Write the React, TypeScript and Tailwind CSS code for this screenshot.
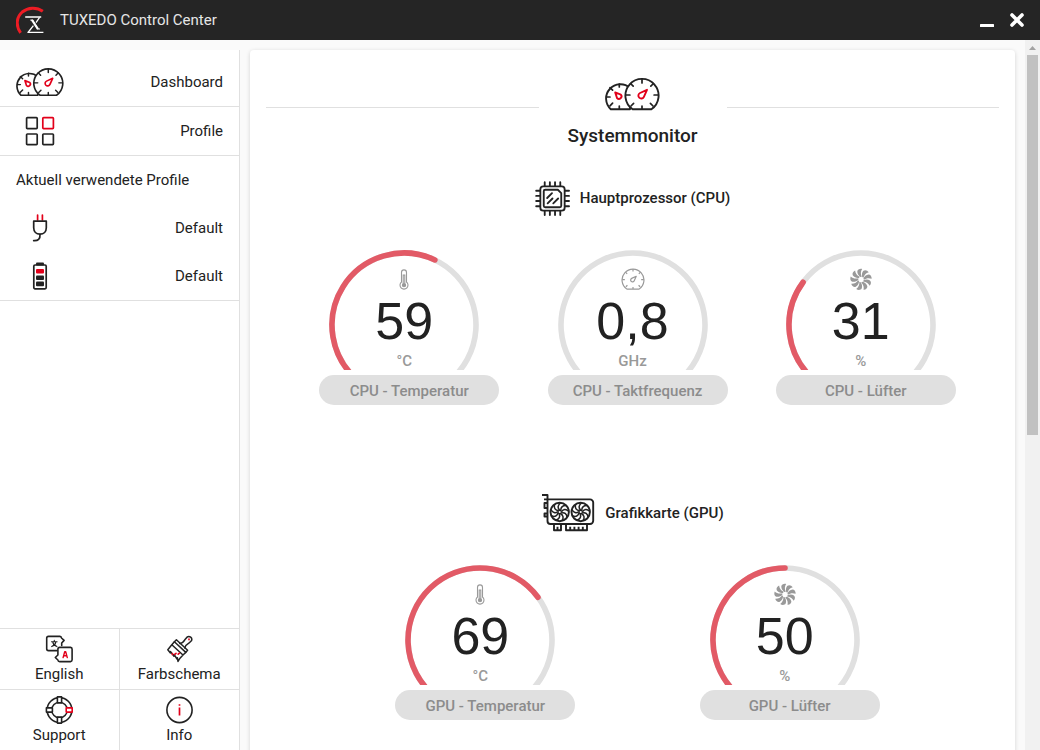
import type { ReactNode } from "react";

const RED = "#e2001a";
const INK = "#222";

function Needle({ small = false }: { small?: boolean }) {
  return small ? (
    <path d="M10.2 15.4 L15.8 17.6 A2.5 2.5 0 1 1 12 21 Z" />
  ) : (
    <path d="M42 12.8 L38.9 19.8 A2.9 2.9 0 1 1 35 16 Z" />
  );
}

function DialsIcon({ className }: { className: string }) {
  return (
    <svg className={className} viewBox="0 0 55 34" fill="none" stroke={INK} strokeWidth="1.9" strokeLinecap="round" strokeLinejoin="round" aria-hidden="true">
      <path d="M5.8 32.2 A13 13 0 1 1 25 11 L25 32.2 Z" />
      <path d="M14.3 7 v3 M1.5 20 h3.5 M14.3 32 v-3 M5 10.6 l2.6 2.6 M5 28.8 l2.6 -2.6" strokeWidth="1.7" />
      <path d="M27.6 32.2 A16.6 16.6 0 1 1 46.4 32.2 Z" fill="#fff" />
      <path d="M37 2 v4 M20.9 18 h4 M49.1 18 h4 M37 32 v-3 M25.5 6.5 l2.7 2.7 M48.5 6.5 l-2.7 2.7 M26 29 l2.6 -2.6 M48 29 l-2.6 -2.6" strokeWidth="1.7" />
      <g stroke={RED} strokeWidth="1.9">
        <Needle small />
        <Needle />
      </g>
    </svg>
  );
}

function SpeedIcon() {
  return (
    <svg className="h-6 w-6" viewBox="18.5 -1.5 37 37" fill="none" stroke="#999" strokeWidth="1.8" strokeLinejoin="round" aria-hidden="true">
      <path d="M27.6 32.6 A16.9 16.9 0 1 1 46.4 32.6 Z" />
      <path d="M37 1.5 v4 M20.4 18 h4 M49.6 18 h4 M37 32.4 v-3 M25.5 6.5 l2.5 2.5 M48.5 6.5 l-2.5 2.5 M26 29 l2.4 -2.4 M48 29 l-2.4 -2.4" />
      <Needle />
    </svg>
  );
}

function ThermometerIcon() {
  return (
    <svg className="h-6 w-6" viewBox="0 0 24 24" fill="none" stroke="#999" strokeWidth="1.1" aria-hidden="true">
      <path d="M9.5 15 V5.4 a2.5 2.5 0 0 1 5 0 V15 a4 4 0 1 1 -5 0 Z" />
      <path d="M11.2 16.6 V8 h1.6 V16.6" />
      <circle cx="12" cy="18.2" r="1.6" fill="#999" />
    </svg>
  );
}

const BLADE_ANGLES = [0, 40, 80, 120, 160, 200, 240, 280, 320];

function FanIcon() {
  return (
    <svg className="h-6 w-6" viewBox="-12 -12.5 24 24" fill="#999" aria-hidden="true">
      {BLADE_ANGLES.map((a) => (
        <path key={a} transform={`rotate(${a})`} d="M0.8 -2.8 C-0.6 -5.6 -0.4 -8.2 1.2 -10.6 C-1 -11.2 -3.4 -10.2 -3.7 -8.2 C-3.8 -6 -2.5 -3.8 -0.6 -2.6 Z" />
      ))}
    </svg>
  );
}

function CpuIcon() {
  return (
    <svg className="h-[35px] w-[35px]" viewBox="0 0 36 36" fill="none" stroke={INK} strokeWidth="1.9" strokeLinecap="round" strokeLinejoin="round" aria-hidden="true">
      <rect x="5.5" y="5.5" width="25" height="25" rx="3" />
      <path d="M10.5 9 H23.5 L27 12.5 V25.5 A1.5 1.5 0 0 1 25.5 27 H10.5 A1.5 1.5 0 0 1 9 25.5 V10.5 A1.5 1.5 0 0 1 10.5 9 Z" />
      <path d="M10 1.2v4M15.3 1.2v4M20.6 1.2v4M26 1.2v4M10 31v4M15.3 31v4M20.6 31v4M26 31v4M1.2 10h4M1.2 15.3h4M1.2 20.6h4M1.2 26h4M31 10h4M31 15.3h4M31 20.6h4M31 26h4" />
      <path d="M12.5 17.5 L17.5 12.5 M13 23 L18 18 M18.8 23 L23.8 18" />
    </svg>
  );
}

function GpuFan({ x }: { x: number }) {
  return (
    <g transform={`translate(${x} 19)`}>
      <circle r="9.2" />
      <circle r="1.7" strokeWidth="1.2" />
      {BLADE_ANGLES.map((a) => (
        <path key={a} transform={`rotate(${a})`} d="M0 -1.9 C-2.4 -4 -2 -6.8 0.8 -9" strokeWidth="1.5" />
      ))}
    </g>
  );
}

function GpuIcon() {
  return (
    <svg className="h-10 w-[54px]" viewBox="-0.5 0 54 40" fill="none" stroke={INK} strokeWidth="1.9" strokeLinejoin="round" aria-hidden="true">
      <path d="M0.5 2 H6 V28 A3 3 0 0 0 9 31 H48.5 A3.2 3.2 0 0 0 51.7 27.8 V9.6 A3.2 3.2 0 0 0 48.5 6.4 H2.5" />
      <path d="M6 10 H3 V15 H6 M6 20.5 H3 V23.5 H6" />
      <path d="M12.5 31 V37.2 H19.5 V31 M16 33.8 V37 M24.5 31 V37.2 H45.5 V31 M28.7 33.8 V37 M32.9 33.8 V37 M37.1 33.8 V37 M41.3 33.8 V37" />
      <GpuFan x={18.2} />
      <GpuFan x={39.2} />
    </svg>
  );
}

function ProfileIcon() {
  return (
    <svg className="h-[30px] w-[30px]" viewBox="0 0 30 30" fill="none" stroke={INK} strokeWidth="1.7" aria-hidden="true">
      <rect x="1.6" y="1.6" width="10.6" height="11" rx="0.8" />
      <rect x="17.8" y="1.6" width="10.6" height="11" rx="0.8" stroke={RED} />
      <rect x="1.6" y="18" width="10.6" height="10.6" rx="0.8" />
      <rect x="17.8" y="18" width="10.6" height="10.6" rx="0.8" />
    </svg>
  );
}

function PlugIcon() {
  return (
    <svg className="h-7 w-4" viewBox="0 0 16 28" fill="none" stroke={INK} strokeWidth="1.7" strokeLinecap="round" strokeLinejoin="round" aria-hidden="true">
      <path d="M5.6 1 V6 M10.4 1 V6" stroke={RED} />
      <path d="M1.7 7.2 H14.3 V13.8 C14.3 17.5 11.8 20.2 8 20.2 C4.2 20.2 1.7 17.5 1.7 13.8 Z" />
      <path d="M8 20.5 C8.4 24.8 6 27 1.7 26.6" />
    </svg>
  );
}

function BatteryIcon() {
  return (
    <svg className="h-7 w-4" viewBox="0 0 16 28" fill={INK} aria-hidden="true">
      <rect x="4" y="0.5" width="8" height="3" rx="1" />
      <rect x="1.8" y="3" width="12.4" height="23.8" rx="1.2" fill="none" stroke={INK} strokeWidth="1.7" />
      <rect x="4" y="7" width="8" height="4.6" rx="1" fill={RED} />
      <rect x="4" y="13.4" width="8" height="4.6" rx="1" />
      <rect x="4" y="19.6" width="8" height="4.6" rx="1" />
    </svg>
  );
}

function LanguageIcon() {
  return (
    <svg className="h-7 w-7" viewBox="-0.5 0 28 28" fill="none" stroke={INK} strokeWidth="1.6" strokeLinejoin="round" strokeLinecap="round" aria-hidden="true">
      <path d="M11.5 15.6 H3 A1.8 1.8 0 0 1 1.2 13.8 V3.2 A1.8 1.8 0 0 1 3 1.4 H14.4 A1.8 1.8 0 0 1 16 3 L18.6 5.4 L16.2 8 V10.5" />
      <path d="M14.2 12.4 H25 A1.8 1.8 0 0 1 26.6 14.2 V24.8 A1.8 1.8 0 0 1 25 26.6 H14.2 A1.8 1.8 0 0 1 12.4 25 L9.8 22.5 L12.4 20 V14.2 A1.8 1.8 0 0 1 14.2 12.4 Z" />
      <path d="M6 6.8 H11.6 M8.8 5.4 V6.8 M10.4 6.8 C10 9 8.4 10.8 6.2 11.6 M7.2 6.8 C7.6 9 9.2 10.8 11.4 11.6" strokeWidth="1.1" />
      <path d="M17.6 22.6 L19.2 16.8 H20.2 L21.8 22.6 M18.2 20.8 H21.2" stroke={RED} strokeWidth="1.4" />
    </svg>
  );
}

function BrushIcon() {
  return (
    <svg className="h-7 w-7" viewBox="-1 0 28 28" fill="none" stroke={INK} strokeWidth="1.5" strokeLinejoin="round" strokeLinecap="round" aria-hidden="true">
      <path d="M13.8 8.4 C16.4 8 17.6 7 18.8 4.8 L21 2.2 A2.9 2.9 0 0 1 25.4 5.8 L22.8 8.2 C20.4 9.6 19.2 10.8 18.8 13" />
      <path d="M8.4 6.8 L10.4 4.8 L21.6 15.2 L19.8 17.4 Z" />
      <path d="M8.4 6.8 L5.8 9.8 L17 20 L19.8 17.4 M5.8 9.8 L1.8 14.8 L4.4 18 L4.6 16.6 L8 21.2 L8.2 19.6 L11 24 L11.4 22.8 L12 26.4 L14 23.2 L17 20" />
      <path d="M6.4 18.6 V19.4 M8.8 19.4 L10 18.4 M12.2 19.2 L13.4 18.2 M23 4.2 V4.6" stroke={RED} strokeWidth="1.7" />
    </svg>
  );
}

function SupportIcon() {
  return (
    <svg className="h-7 w-7" viewBox="-0.5 0 28 28" fill="none" stroke={INK} strokeWidth="1.6" strokeLinejoin="round" aria-hidden="true">
      <circle cx="14" cy="14" r="12.4" />
      <circle cx="14" cy="14" r="7.8" />
      <g fill="#fff">
        <rect x="11.9" y="0.9" width="4.2" height="6" />
        <rect x="11.9" y="21.1" width="4.2" height="6" />
        <rect x="0.9" y="11.9" width="6" height="4.2" />
        <rect x="20.7" y="11.9" width="6" height="4.2" stroke={RED} />
      </g>
    </svg>
  );
}

function InfoIcon() {
  return (
    <svg className="h-7 w-7" viewBox="-0.5 0 28 28" fill="none" stroke={INK} strokeWidth="1.6" aria-hidden="true">
      <circle cx="14" cy="14" r="12.6" />
      <path d="M14 11.4 V19.4 M14 8.2 V9.8" stroke={RED} strokeWidth="1.7" />
    </svg>
  );
}

function LogoIcon() {
  return (
    <svg className="h-7 w-7" viewBox="0 0 28 28" fill="none" aria-hidden="true">
      <path d="M4.6 26.8 C-0.4 20 0.2 11.4 6.2 6 C12 1.2 20.6 0.8 26.8 5.2" stroke="#ed1c24" strokeWidth="3" />
      <path d="M9.2 11 H25.2 M11.4 26.4 H27.4" stroke="#fff" strokeWidth="1.3" />
      <path d="M23.6 11.4 L20 16.6 M17.4 19.6 L12.4 26" stroke="#fff" strokeWidth="1.3" />
      <path d="M14.4 14.2 H16.6 L21.8 23 H24" stroke="#fff" strokeWidth="1.2" />
      <path d="M16 14 L22 23.2" stroke="#fff" strokeWidth="2.2" />
    </svg>
  );
}

type GaugeData = { value: number; text: string; unit: string; label: string; icon: ReactNode };

// The scale runs symmetrically around the top, 141 degrees to each side.
const SWEEP = 141;

function arcPoint(deg: number) {
  const rad = (deg * Math.PI) / 180;
  return `${75 + 72 * Math.sin(rad)} ${75 - 72 * Math.cos(rad)}`;
}

function arc(from: number, to: number) {
  return `M${arcPoint(from)} A72 72 0 ${to - from > 180 ? 1 : 0} 1 ${arcPoint(to)}`;
}

function Gauge({ value, text, unit, label, icon }: GaugeData) {
  const end = -SWEEP + (value / 100) * SWEEP * 2;
  return (
    <div className="flex w-[180px] flex-col gap-[5px]">
      <div className="mx-auto grid h-[120px] w-[150px] overflow-hidden">
        <svg className="col-start-1 row-start-1 h-[150px] w-[150px]" viewBox="0 0 150 150" fill="none" strokeWidth="5.6" strokeLinecap="round" aria-hidden="true">
          <path d={arc(-SWEEP, SWEEP)} stroke="#e0e0e0" />
          {value > 0 && <path d={arc(-SWEEP, end)} stroke="#e25a66" />}
        </svg>
        <div className="col-start-1 row-start-1 flex flex-col items-center pt-[17px]">
          {icon}
          <span className="font-['Liberation_Sans',sans-serif] text-[52px] leading-[60px] text-[#222]">{text}</span>
          <span className="text-[15px] leading-5 font-medium text-[#999]">{unit}</span>
        </div>
      </div>
      <div className="ml-[5px] h-[30px] w-[180px] rounded-full bg-[#e0e0e0] text-center text-[15px] leading-8 font-medium text-[#8c8c8c]">
        {label}
      </div>
    </div>
  );
}

function GaugeSection({ title, icon, gauges }: { title: string; icon: ReactNode; gauges: GaugeData[] }) {
  return (
    <section className="pb-[84px]">
      <div className="flex h-12 items-center justify-center gap-[10px]">
        {icon}
        <h2 className="text-[15px] font-medium">{title}</h2>
      </div>
      <div className="mt-7 flex justify-evenly">
        {gauges.map((g) => (
          <Gauge key={g.label} {...g} />
        ))}
      </div>
    </section>
  );
}

const cpuGauges: GaugeData[] = [
  { value: 59, text: "59", unit: "°C", label: "CPU - Temperatur", icon: <ThermometerIcon /> },
  { value: 0, text: "0,8", unit: "GHz", label: "CPU - Taktfrequenz", icon: <SpeedIcon /> },
  { value: 31, text: "31", unit: "%", label: "CPU - Lüfter", icon: <FanIcon /> },
];

const gpuGauges: GaugeData[] = [
  { value: 69, text: "69", unit: "°C", label: "GPU - Temperatur", icon: <ThermometerIcon /> },
  { value: 50, text: "50", unit: "%", label: "GPU - Lüfter", icon: <FanIcon /> },
];

function NavRow({ icon, label, bordered = false }: { icon: ReactNode; label: string; bordered?: boolean }) {
  return (
    <a href="#" className={bordered ? "flex items-center justify-between border-b border-[#e0e0e0] px-4" : "flex items-center justify-between px-4"}>
      <span className="flex h-12 w-12 items-center justify-center">{icon}</span>
      {label}
    </a>
  );
}

function FooterButton({ icon, label, divided = false }: { icon: ReactNode; label: string; divided?: boolean }) {
  return (
    <button type="button" className={divided ? "flex h-[61px] flex-col items-center border-t border-r border-[#e0e0e0] pt-[6px]" : "flex h-[61px] flex-col items-center border-t border-[#e0e0e0] pt-[6px]"}>
      {icon}
      <span className="leading-[22px]">{label}</span>
    </button>
  );
}

export default function App() {
  return (
    <div className="flex h-screen flex-col overflow-hidden bg-[#fafafa] font-[Roboto,sans-serif] text-[15px] text-[#222]">
      <header className="flex h-10 shrink-0 items-center bg-[#252525] pr-2 pl-4 text-[#e6e6e6]">
        <LogoIcon />
        <h1 className="ml-4 flex-1">TUXEDO Control Center</h1>
        <button type="button" aria-label="Minimieren" className="flex h-10 w-[30px] items-center justify-center">
          <svg className="h-4 w-4" viewBox="0 0 16 16" aria-hidden="true">
            <rect x="1" y="12" width="14" height="3" rx="0.5" fill="#fff" />
          </svg>
        </button>
        <button type="button" aria-label="Schließen" className="flex h-10 w-[30px] items-center justify-center">
          <svg className="h-4 w-4" viewBox="0 0 16 16" stroke="#fff" strokeWidth="3.6" strokeLinecap="round" aria-hidden="true">
            <path d="M3 3 L13 13 M13 3 L3 13" />
          </svg>
        </button>
      </header>

      <div className="flex min-h-0 flex-1">
        <aside className="mt-[10px] flex w-60 shrink-0 flex-col border-r border-[#e0e0e0] bg-white pt-2">
          <nav>
            <NavRow bordered icon={<DialsIcon className="h-[30px] w-12" />} label="Dashboard" />
            <NavRow bordered icon={<ProfileIcon />} label="Profile" />
            <h3 className="px-4 leading-[48px]">Aktuell verwendete Profile</h3>
            <NavRow icon={<PlugIcon />} label="Default" />
            <NavRow bordered icon={<BatteryIcon />} label="Default" />
          </nav>
          <div className="mt-auto grid grid-cols-2">
            <FooterButton divided icon={<LanguageIcon />} label="English" />
            <FooterButton icon={<BrushIcon />} label="Farbschema" />
            <FooterButton divided icon={<SupportIcon />} label="Support" />
            <FooterButton icon={<InfoIcon />} label="Info" />
          </div>
        </aside>

        <main className="min-w-0 flex-1 overflow-hidden px-[10px] pt-[10px]">
          <div className="min-h-full rounded bg-white px-4 pt-6 shadow-[0_1px_4px_rgba(0,0,0,0.16)]">
            <div className="flex items-start">
              <div className="mt-[33px] flex-1 border-t border-[#e0e0e0]" />
              <div className="flex w-[188px] flex-col items-center">
                <DialsIcon className="mt-[3px] h-[34px] w-[55px]" />
                <h2 className="mt-[13px] text-[19px] leading-6 font-medium">Systemmonitor</h2>
              </div>
              <div className="mt-[33px] flex-1 border-t border-[#e0e0e0]" />
            </div>
            <div className="pt-[26px]">
              <GaugeSection title="Hauptprozessor (CPU)" icon={<CpuIcon />} gauges={cpuGauges} />
              <GaugeSection title="Grafikkarte (GPU)" icon={<GpuIcon />} gauges={gpuGauges} />
            </div>
          </div>
        </main>

        <div className="flex w-[15px] shrink-0 flex-col items-center bg-[#f1f1f1]" aria-hidden="true">
          <svg className="h-[15px] w-[15px] shrink-0" viewBox="0 0 15 15">
            <path d="M4 10 L7.5 6 L11 10 Z" fill="#a3a3a3" />
          </svg>
          <div className="h-[380px] w-[11px] bg-[#c1c1c1]" />
        </div>
      </div>
    </div>
  );
}
